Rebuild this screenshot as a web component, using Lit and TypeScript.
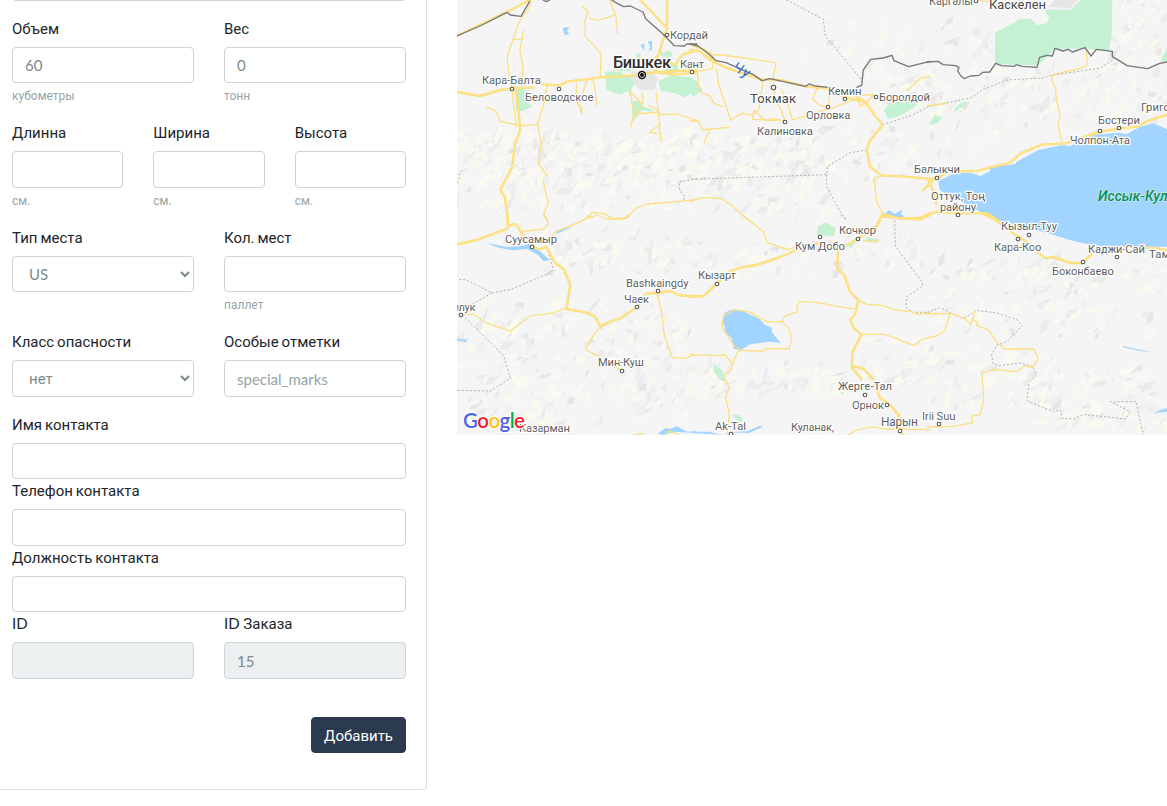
import { LitElement, html, svg, css } from "lit";
import { customElement, property } from "lit/decorators.js";

type Box = [number, number, number, number, number];

/* Mountain ranges: x, y, width, height, number of facets */
const RANGES: Box[] = [
  [457, 132, 60, 80, 90],
  [515, 132, 185, 55, 200],
  [520, 180, 160, 30, 40],
  [690, 138, 130, 50, 130],
  [690, 190, 150, 28, 35],
  [800, 128, 130, 55, 50],
  [800, 20, 130, 40, 14],
  [868, 65, 130, 40, 60],
  [930, 105, 70, 50, 25],
  [995, 64, 172, 62, 90],
  [930, 0, 70, 60, 20],
  [1110, 0, 57, 60, 40],
  [545, 228, 145, 45, 80],
  [690, 242, 150, 36, 35],
  [457, 305, 235, 120, 230],
  [690, 362, 155, 34, 90],
  [840, 230, 90, 40, 30],
  [860, 337, 70, 45, 40],
  [930, 257, 237, 80, 130],
  [930, 348, 130, 60, 80],
  [1040, 368, 127, 55, 75],
  [1060, 405, 107, 28, 25],
];
const SHADES = ["#e6e6e6", "#ebebeb", "#efefef", "#f9f9ef", "#fafaf1"];

function buildRelief(): string[] {
  let seed = 7;
  const rnd = () => {
    seed = (seed * 16807) % 2147483647;
    return seed / 2147483647;
  };
  const paths = SHADES.map(() => "");
  for (const [x, y, w, h, n] of RANGES) {
    for (let i = 0; i < n; i++) {
      const cx = x + rnd() * w;
      const cy = y + rnd() * h;
      const l = 3 + rnd() * rnd() * 11;
      const a = -0.25 - rnd() * 1.1;
      const t = 1 + rnd() * 3;
      const dx = Math.cos(a) * l;
      const dy = Math.sin(a) * l;
      const f = (v: number) => v.toFixed(1);
      const shade = Math.min(SHADES.length - 1, Math.floor(Math.pow(rnd(), 0.7) * SHADES.length));
      paths[shade] +=
        `M${f(cx - dx)} ${f(cy - dy)}L${f(cx - t)} ${f(cy - t * rnd())}L${f(cx + dx)} ${f(cy + dy)}L${f(cx + t * 0.7)} ${f(cy + t)}Z`;
    }
  }
  return paths;
}
const RELIEF = buildRelief();

interface Tile {
  x: number;
  y: number;
  green?: string;
  water?: string;
  minor?: string;
  major?: string;
  dash?: string;
  border?: string;
}

/* Each tile is drawn at triple scale from its own origin */
const TILES: Tile[] = [
  {
    x: 457, y: 0,
    green: "M181 260L204 263L202 302L228 318L196 334L176 330V300ZM444 214L490 216L540 244L518 272L486 284L448 268ZM480 208L522 204V214L478 212ZM604 160L640 152L648 168L620 174ZM620 192L664 196L662 218L625 220ZM604 244L640 226L700 232L722 246L722 270L680 292L656 280L612 274ZM512 265L524 270L520 290ZM524 304L548 302L556 318L588 330L584 336L556 330L538 354L528 362ZM538 162L550 160V172H538Z",
    water: "M318 84L337 80L330 92L337 102L326 106L319 96ZM550 136L562 130V152ZM572 124H585V150L574 152L580 140Z",
    minor: "M220 0C220 36 196 40 183 75L150 170L158 240L165 270L178 382M200 90L196 112L188 152L198 200L194 260M168 118H196M270 256L264 300L242 372L252 430L244 488L268 526M192 377L242 373M192 377L130 364C124 340 108 322 88 324M258 540L274 612L260 640L268 660M376 20L394 36L384 60L385 110L432 160L430 228M398 54L420 61L476 45L458 0M476 45L482 100M358 250V296L374 342V322L348 298M390 240L372 296M403 236L412 252L420 316M520 270L530 348L520 382M524 280L556 312L536 342L608 336M536 342L528 360M556 280L558 310M576 316L600 330M598 280L604 340L612 424M608 344L660 342L720 362M612 370L594 384L576 398L600 400M470 222V196L500 205M540 172L600 182M380 660L408 637L440 640L466 655L510 654L536 625L570 612L660 605L720 598",
    major: "M0 108L145 38L218 0M0 276L70 288L130 270L166 266L230 262M256 253L308 256L330 245L430 232L524 227L600 216L720 210M174 260L182 306L190 390L174 430L166 500L130 570L144 592L152 660M550 0L630 84M630 0V85L600 176L594 216M594 216L650 224L720 218M625 182L655 195L676 164L720 152M612 154L590 182L592 216",
    dash: "M0 548C14 540 0 520 14 512M720 536L666 546L668 570L684 592L676 606",
    border: "M0 108L75 75L150 37L160 45L192 49L218 4M258 0L268 5L278 0M464 0L480 10L500 20L520 18L558 36L566 56L618 102L652 137L682 138L690 132L720 132",
  },
  {
    x: 690, y: 0,
    green: "M582 330C605 300 630 294 675 275L690 304C670 325 640 350 594 357ZM0 244L20 246L38 270L10 290L0 280Z",
    water: "M576 648L598 630L614 642L638 628L630 654Z",
    minor: "M46 150L72 165H98L258 188L248 242M68 170V205L0 218M80 208L86 255L122 360L156 340L180 346L206 330L214 278L220 244M22 216L26 260L36 280L58 286L72 310L96 320M250 250L254 300L274 330L285 364L248 355L228 362L200 340L192 332L188 358L260 362M275 270L290 300L308 360L430 322L490 300M385 256L368 298L392 318L415 320L420 274M500 292L512 320L552 285L470 284M0 362L26 364L36 390L116 382M58 392L42 430M720 230L690 236L650 272M0 604L40 592L96 596L130 620L174 660M570 530L552 536L560 606L578 640",
    major: "M0 150L30 154L60 180L110 204L212 238L270 240L350 260L416 266L462 290L530 308L550 342L578 374L540 422L530 450L540 500L574 526L640 530L720 536M0 132L44 150L70 180M490 284L522 304L550 338M568 660L580 642L630 656L690 654L720 640M720 548L700 570",
    dash: "M290 0L400 58L406 108L515 240M578 374L660 348L720 318M530 450L480 458L412 500L410 524L0 538M410 524L410 560L450 635L470 660",
    border: "M0 132L24 138L58 163L78 182L108 188L190 224L216 242L240 236L346 259L358 252L374 258L416 262M500 262L515 256L520 210L542 178L580 174L606 166L612 182L656 200L720 184",
  },
  {
    x: 927, y: 0,
    green: "M204 98L258 70L280 56L310 56L330 75L360 70L366 50L350 28L430 30L462 0H556L554 110L545 150H500L480 145L382 148L334 196L204 192ZM700 184L720 145V186ZM6 374L22 346L46 352L32 370ZM80 330L96 312L122 302L116 316L86 334Z",
    water: "M34 544L80 520L130 518L160 528L188 514L190 502L266 492L268 486L334 450L402 436L430 438L505 404L575 398L600 402L640 380L680 370L720 388V740H600C550 748 485 735 420 718C370 700 320 690 275 676L212 660L160 636C130 612 80 600 38 570Z",
    minor: "M476 148L482 195L460 205L378 224L374 240L386 264L388 300L400 346L392 372L405 426M0 318L60 310M160 2L186 4",
    major: "M0 538L32 534L60 516L152 512L250 488L280 460L345 434L415 430L445 420L515 396L575 386L630 380L664 362L720 344M0 560L20 538M6 545L22 580L28 610M0 645L30 635L90 640L180 640L212 660",
    dash: "M0 320L60 308L130 294L170 268L240 240L345 234L376 226L520 204L556 182",
    border: "M0 186L34 184L48 194L86 197L96 202L92 213L102 228L112 236L130 228L156 226L168 217L188 216L206 190L224 197L262 199L268 194L286 199L330 202L338 172L360 166L376 168L384 145L408 153L424 148L436 156L474 143L492 168L508 148L556 154V170L580 184L600 197L662 206L698 190L720 186",
  },
  {
    x: 457, y: 215,
    water: "M88 84L150 96L200 92L222 82L246 106L278 136L258 138L244 120L210 102L166 106L120 97ZM0 370L30 376L28 382L0 376ZM296 48L350 34L300 56ZM602 656L624 640L640 642L660 634L690 650L720 648V654L650 650L620 660Z",
    minor: "M190 50L260 42L272 30V14L260 0M276 76L296 50L370 20L400 4M400 8L420 0L450 12L500 12L515 0M18 298L50 298L84 322L130 338L160 348L220 302L260 298L290 294L322 280M430 335L405 368L386 402L400 412L426 424M466 454L494 464M600 234L612 280L622 360L646 428L682 430L720 418M530 660L560 655M626 660L636 648L664 658",
    major: "M0 88L60 75L152 40V0M152 30L178 28L196 58L224 92L246 104L268 95L294 144L320 162L340 210L328 282L386 292L414 304L430 335L460 320L490 310L540 276L566 236L602 234L640 228L665 240L720 246M414 304L432 338",
    dash: "M268 95L288 160L282 172L165 222L104 234L50 206L24 194H0M104 234L0 295M24 308L140 422L160 490L100 528L0 526",
  },
  {
    x: 690, y: 215,
    green: "M382 36L408 22L438 40L432 64L382 60ZM530 66L568 76L562 82L528 80ZM464 88L500 80L484 98ZM70 446L96 466L108 500L92 496L72 470ZM126 600L144 598L160 614L150 624ZM448 530L460 532V544Z",
    water: "M104 334C94 318 96 300 108 292C126 278 156 284 170 294L206 310L226 330L246 338V352L272 384L238 380L180 388L150 408L130 400L126 372L106 350ZM570 0H640V6L612 10L580 8ZM0 654L30 650L58 650L96 660L50 656ZM116 652L174 648L210 632L218 636L176 654Z",
    minor: "M158 0L220 50L232 82L290 104L314 98M96 322L104 300L136 284L182 292L230 320H276L284 304L324 290L320 280L326 260L386 263L430 272L490 282M96 322L98 340L134 394L152 406L220 408L230 400L298 402L306 370L296 340L276 320M0 418L80 422L104 420L128 446L120 468L100 480L118 520L106 545L118 596L112 658M128 446L142 412L154 404M505 256L530 268L580 272L610 284L665 290L680 298L720 294M515 358H580L610 366L640 380L675 392L690 376L720 366M474 660L500 645L545 636L584 642L720 644M420 82L440 80M520 76L566 80",
    major: "M0 243L40 244L80 206L120 170L150 158L200 150L270 126L360 88L395 84M445 108L440 158L462 180L480 230L505 256L494 300L480 315L492 340L515 358L488 410L486 452L522 462L550 494L570 548L600 570L628 602V648L640 660M486 458L514 492M576 0L558 40L504 70L450 104M580 4L640 10L690 14L720 0",
    dash: "M452 0L470 14M578 0L550 42M614 4L616 94L696 200L698 212L650 246L648 276L668 292H720",
  },
  {
    x: 927, y: 215,
    water: "M586 392L620 400L674 412L640 408L590 397ZM680 595L700 585L720 580V590Z",
    minor: "M0 296L70 295L52 348L30 362L0 370M70 295L116 312L132 330L144 288M134 312L150 320V332L184 344L208 380L234 402L320 402L334 432L316 458L292 452L268 470L200 464L164 476L170 530L168 570L158 600L136 602V624L80 634L0 636",
    major: "M164 -6L210 18L260 56L310 88L330 110L355 130L380 126L430 144H464L496 116M655 98L690 100L720 106",
    dash: "M0 292L40 278L100 308H116L146 286L210 294L270 314L286 332L240 380L210 390L194 420L198 446L214 452L280 444L318 454L328 480L306 502L300 554L310 562L380 590L400 584L406 610L440 612L470 598L596 612L610 590L550 560H628L648 660",
  },
];

/* x, y are the left end and baseline of the label; w is its drawn width */
interface Label {
  t: string; x: number; y: number; w: number; s?: number; c?: string;
}
const LABELS: Label[] = [
  { t: "Кордай", x: 670, y: 39, w: 38 },
  { t: "Бишкек", x: 613, y: 67.5, w: 58, s: 16.5, c: "city" },
  { t: "Кант", x: 680, y: 68, w: 24 },
  { t: "Кара-Балта", x: 482, y: 84, w: 59 },
  { t: "Беловодское", x: 525, y: 101, w: 68.5 },
  { t: "Токмак", x: 750, y: 103, w: 46, s: 13, c: "town" },
  { t: "Калиновка", x: 757, y: 135, w: 56 },
  { t: "Орловка", x: 806, y: 119, w: 44.5 },
  { t: "Кемин", x: 828, y: 95, w: 33.5 },
  { t: "Боролдой", x: 879, y: 101, w: 51 },
  { t: "Каргалы", x: 929, y: 5, w: 44 },
  { t: "Каскелен", x: 989, y: 9, w: 57, s: 13, c: "town" },
  { t: "Григорьевка", x: 1141, y: 111, w: 66 },
  { t: "Бостери", x: 1098, y: 124, w: 42 },
  { t: "Чолпон-Ата", x: 1070, y: 144, w: 60 },
  { t: "Балыкчи", x: 914, y: 173, w: 46 },
  { t: "Оттук, Тоң", x: 931, y: 200, w: 54 },
  { t: "району", x: 940, y: 211, w: 36 },
  { t: "Суусамыр", x: 505, y: 243, w: 52 },
  { t: "Bashkaingdy", x: 626, y: 287, w: 62.5 },
  { t: "Чаек", x: 624, y: 303, w: 25 },
  { t: "Толук", x: 447, y: 311, w: 28.5 },
  { t: "Мин-Куш", x: 598, y: 366, w: 46 },
  { t: "Казарман", x: 519, y: 432, w: 51 },
  { t: "Кызарт", x: 698, y: 279, w: 38 },
  { t: "Кочкор", x: 839, y: 234, w: 37 },
  { t: "Кум Добо", x: 795, y: 250, w: 50 },
  { t: "Жерге-Тал", x: 838, y: 390, w: 54 },
  { t: "Орнок", x: 852, y: 409, w: 32 },
  { t: "Нарын", x: 881, y: 426, w: 37, s: 12 },
  { t: "Irii Suu", x: 922, y: 420, w: 33.5 },
  { t: "Ak-Tal", x: 715, y: 430, w: 31 },
  { t: "Куланак,", x: 791, y: 431, w: 43 },
  { t: "Кызыл-Туу", x: 1001, y: 230, w: 56 },
  { t: "Кара-Коо", x: 994, y: 251, w: 47.5 },
  { t: "Каджи-Сай", x: 1088, y: 253, w: 57 },
  { t: "Боконбаево", x: 1052, y: 275, w: 62 },
  { t: "Тамга", x: 1149, y: 258, w: 32 },
];
const DOTS: [number, number][] = [
  [667, 35], [692, 72], [512, 89], [559, 89], [785, 122], [828, 107], [845, 99],
  [876, 97], [976, 1], [1119, 128], [1100, 131], [937, 178], [958, 215], [532, 247],
  [658, 291], [637, 307], [461, 315], [622, 371], [717, 284], [820, 237], [858, 239],
  [865, 395], [887, 405], [900, 431], [939, 424], [731, 434], [1029, 235],
  [1018, 239], [1083, 262], [1117, 257],
];

@customElement("terrain-map")
class TerrainMap extends LitElement {
  static styles = css`
    :host { display: block; overflow: hidden; background: #f5f5f5; }
    svg { display: block; width: 710px; height: 435px; }
    path { stroke-linejoin: round; stroke-linecap: round; }
    .line { fill: none; }
    .green { fill: #c3f1d2; }
    .water { fill: #a1d4ff; }
    .minor { stroke: #fbdf80; stroke-width: 3.8; }
    .major { stroke: #f8db70; stroke-width: 7.2; }
    .core { stroke: #ffe58c; stroke-width: 3.5; }
    .dash { stroke: #a9a9a9; stroke-width: 2.8; stroke-dasharray: 6 6; stroke-linecap: butt; }
    .border { stroke: #777; stroke-width: 4; }
    .urban { fill: #e6e6e6; }
    text { font-family: Roboto, sans-serif; fill: #5e5e5e; stroke: #fff; stroke-width: 2.4px; stroke-linejoin: round; paint-order: stroke; }
    .town { fill: #484848; }
    .city { fill: #303030; font-weight: 500; }
    .lake { fill: #0c8f5c; font-style: italic; font-weight: 500; stroke: #c5e9f2; stroke-width: 1.5px; }
    .river { fill: #3367d6; stroke: none; font-style: italic; }
    .dot { fill: #fff; stroke: #555; stroke-width: 1.1; }
    .logo { font-family: Lato, sans-serif; font-weight: 600; stroke-width: 2px; }
    .b { fill: #4b63ee; }
    .r { fill: #f8182e; }
    .y { fill: #fbc412; }
    .g { fill: #00ac47; }
  `;

  private layer(key: keyof Tile, cls: string) {
    return TILES.map((t) =>
      t[key]
        ? svg`<path class=${cls} transform="translate(${t.x} ${t.y}) scale(.33333)" d=${String(t[key])}></path>`
        : null
    );
  }

  render() {
    return html`
      <svg viewBox="457 0 710 435">
        ${RELIEF.map((d, i) => svg`<path d=${d} fill=${SHADES[i]}></path>`)}
        ${this.layer("green", "green")}
        ${this.layer("water", "water")}
        <path class="urban" d="M631 72L650 69L658 79L654 90L640 90L632 82ZM1055 0H1078L1070 8L1048 7Z"></path>
        ${this.layer("dash", "line dash")}
        ${this.layer("minor", "line minor")}
        ${this.layer("major", "line major")}
        ${this.layer("major", "line core")}
        ${this.layer("border", "line border")}
        ${DOTS.map(([x, y]) => svg`<circle class="dot" cx=${x} cy=${y} r="1.8"></circle>`)}
        <circle class="dot" cx="773.5" cy="87.5" r="2.2"></circle>
        <circle cx="642" cy="75" r="4.2" fill="#111"></circle>
        <circle cx="642" cy="75" r="2.5" fill="none" stroke="#fff" stroke-width=".8"></circle>
        ${LABELS.map(
          (l) => svg`<text class=${l.c ?? ""} x=${l.x} y=${l.y} font-size=${l.s ?? 11.3} textLength=${l.w}>${l.t}</text>`
        )}
        <text class="river" x="732" y="70" font-size="14" textLength="17" transform="rotate(28 732 70)">Чу</text>
        <text class="lake" x="1098" y="201" font-size="14" textLength="77">Иссык-Куль</text>
        <text class="logo" x="463" y="428" font-size="20.5" textLength="62"><tspan class="b">G</tspan><tspan class="r">o</tspan><tspan class="y">o</tspan><tspan class="b">g</tspan><tspan class="g">l</tspan><tspan class="r">e</tspan></text>
      </svg>
    `;
  }
}

@customElement("form-field")
class FormField extends LitElement {
  @property() label = "";
  @property() value = "";
  @property() hint = "";
  @property() placeholder = "";
  @property({ type: Boolean }) select = false;
  @property({ type: Boolean }) disabled = false;

  static styles = css`
    :host { display: block; flex: 1 1 0; min-width: 0; }
    .label { display: block; height: 22px; margin-bottom: 8px; font: 15px/22px Lato, sans-serif; color: #212529; white-space: nowrap; }
    .control {
      display: block; box-sizing: border-box; width: 100%; height: 36.5px; margin: 0;
      padding: 6.5px 12px 5.5px; border: 1px solid #ced4da; border-radius: 4px; background: #fff;
      font: 15px/22.5px Lato, Roboto, sans-serif; color: #7b8a8b;
    }
    .control::placeholder { color: #95a5a6; opacity: 1; }
    .control:disabled { background: #ecf0f1; opacity: 1; }
    .cyr { font-family: Roboto, sans-serif; }
    .tight { word-spacing: -0.8px; }
    .hint { display: block; margin-top: 4px; height: 18px; font: 12px/18px Roboto, sans-serif; color: #95a5a6; }
  `;

  render() {
    const latin = this.label.startsWith("ID");
    const cyr = /[а-я]/.test(this.value) ? "cyr" : "";
    return html`
      ${this.label
        ? html`<label class="label">${latin
            ? html`ID<span class="cyr">${this.label.slice(2)}</span>`
            : html`<span class="cyr tight">${this.label}</span>`}</label>`
        : null}
      ${this.select
        ? html`<select class="control ${cyr}"><option>${this.value}</option></select>`
        : html`<input class="control" .value=${this.value} placeholder=${this.placeholder} ?disabled=${this.disabled} />`}
      ${this.hint ? html`<small class="hint">${this.hint}</small>` : null}
    `;
  }
}

@customElement("app-root")
class AppRoot extends LitElement {
  static styles = css`
    :host { display: flex; align-items: flex-start; gap: 30px; height: 806px; overflow: hidden; background: #fff; }
    .card {
      box-sizing: border-box; width: 427px; height: 826px; flex: none; margin-top: -36px;
      padding: 0 20px 36px 12px; border: 1px solid #dfdfdf; border-width: 0 1px 1px 0;
      border-bottom-right-radius: 4px;
    }
    .row { display: flex; gap: 30px; }
    .spaced { margin-bottom: 16px; }
    .actions { display: flex; justify-content: flex-end; margin-top: 38px; }
    .submit {
      height: 36.5px; padding: 7px 12px 5px; border: 1px solid #2c3a50; border-radius: 4px;
      background: #2c3a50; color: #fff; font: 15px/22.5px Roboto, sans-serif;
    }
    .map { flex: 1; height: 435px; }
  `;

  render() {
    return html`
      <form class="card">
        <div class="row spaced"><form-field></form-field></div>
        <div class="row spaced">
          <form-field label="Объем" value="60" hint="кубометры"></form-field>
          <form-field label="Вес" value="0" hint="тонн"></form-field>
        </div>
        <div class="row spaced">
          <form-field label="Длинна" hint="см."></form-field>
          <form-field label="Ширина" hint="см."></form-field>
          <form-field label="Высота" hint="см."></form-field>
        </div>
        <div class="row spaced">
          <form-field label="Тип места" value="US" select></form-field>
          <form-field label="Кол. мест" hint="паллет"></form-field>
        </div>
        <div class="row spaced">
          <form-field label="Класс опасности" value="нет" select></form-field>
          <form-field label="Особые отметки" placeholder="special_marks"></form-field>
        </div>
        <form-field label="Имя контакта"></form-field>
        <form-field label="Телефон контакта"></form-field>
        <form-field label="Должность контакта"></form-field>
        <div class="row">
          <form-field label="ID" disabled></form-field>
          <form-field label="ID Заказа" value="15" disabled></form-field>
        </div>
        <div class="actions"><button class="submit" type="button">Добавить</button></div>
      </form>
      <terrain-map class="map"></terrain-map>
    `;
  }
}
